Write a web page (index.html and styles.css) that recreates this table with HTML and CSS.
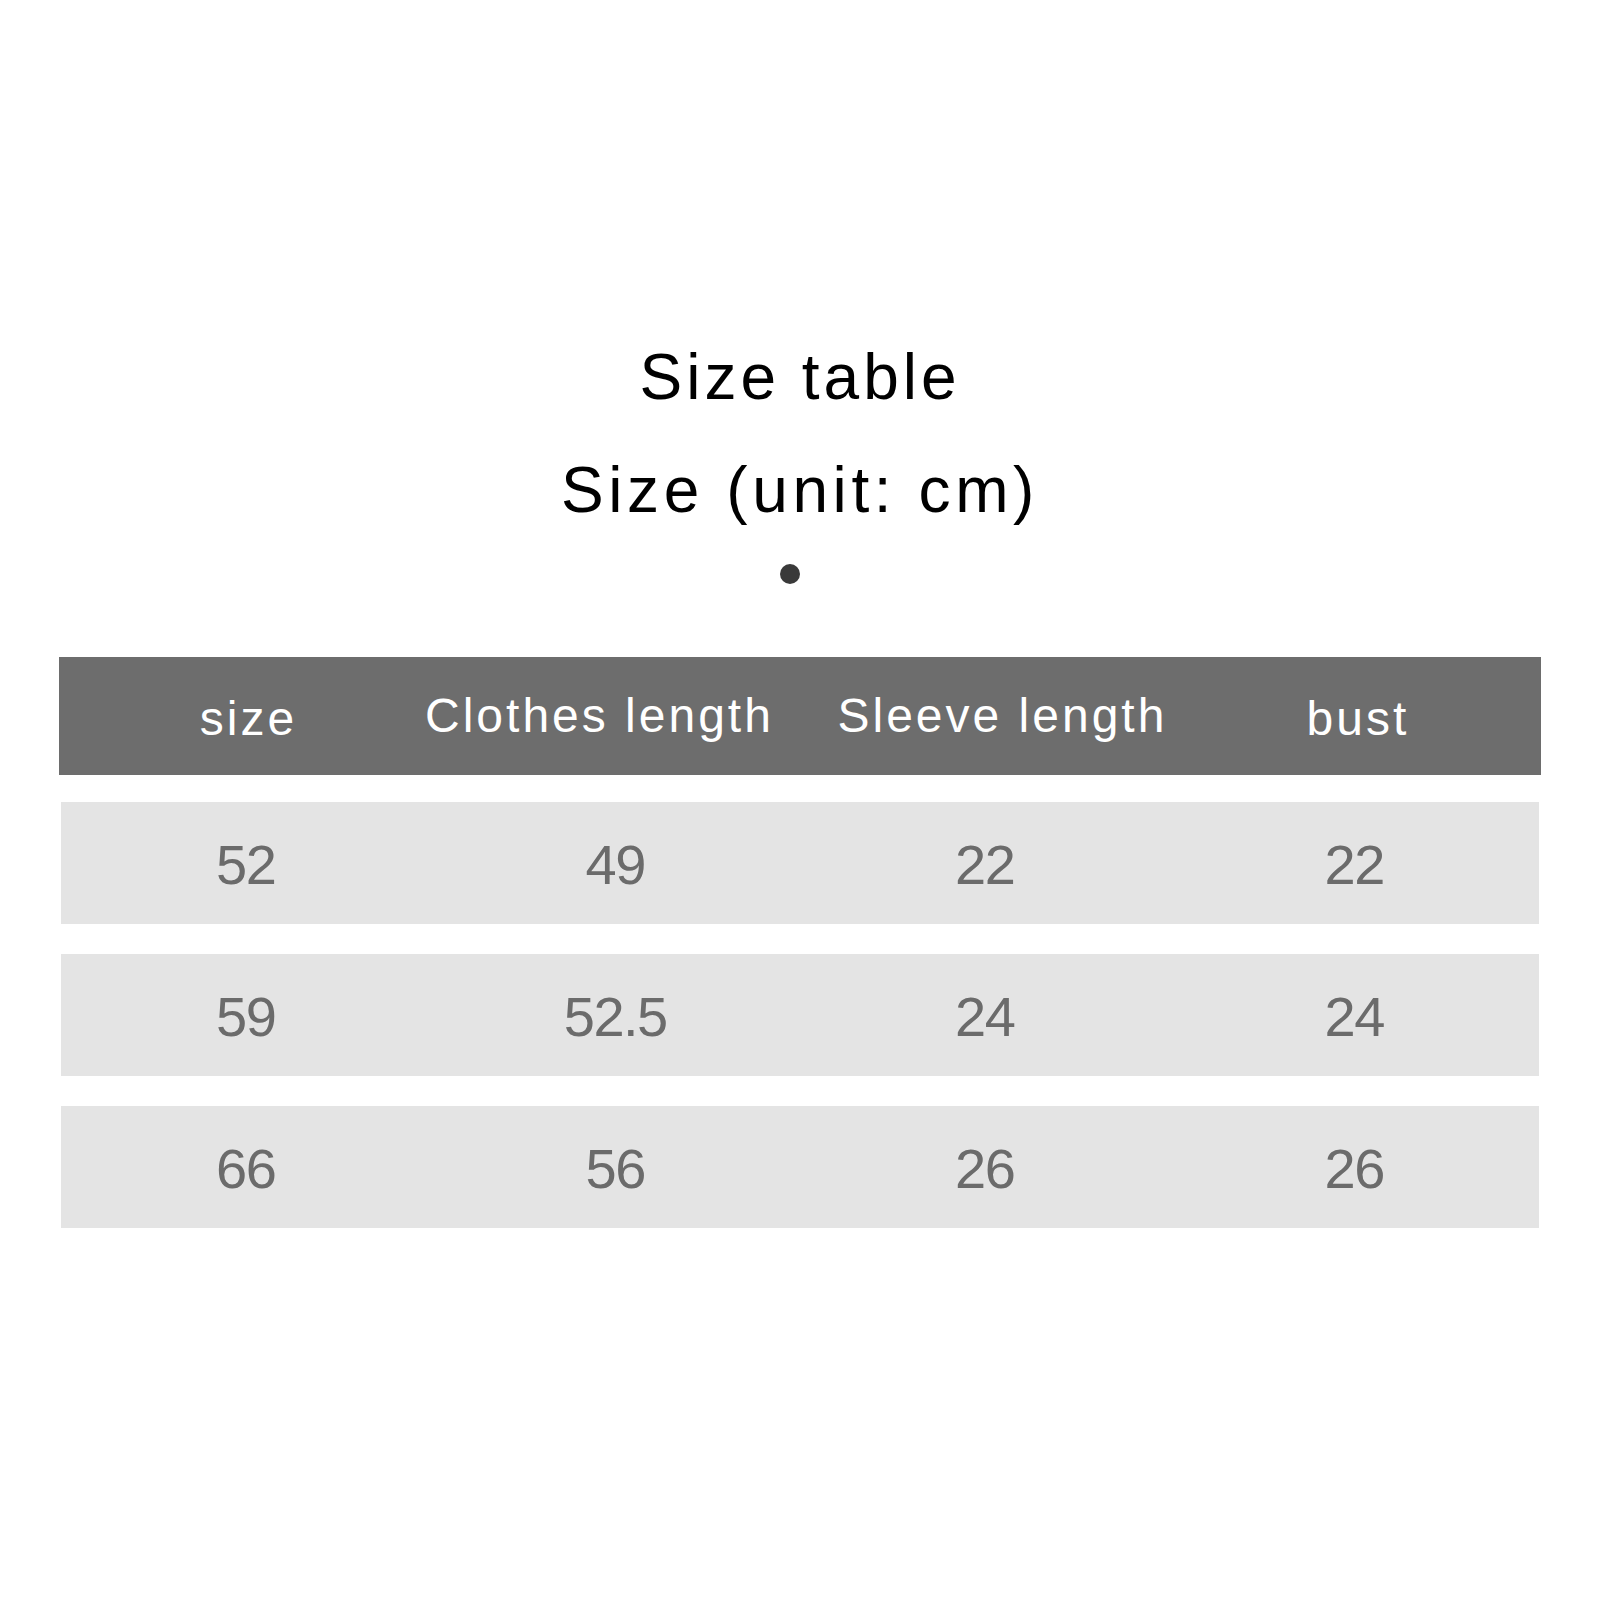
FILE: index.html
```html
<!DOCTYPE html>
<html lang="en">
<head>
<meta charset="utf-8">
<title>Size table</title>
<link rel="stylesheet" href="styles.css">
</head>
<body>
<main class="page">
  <h1 class="title">Size table</h1>
  <h2 class="title title-unit">Size (unit: cm)</h2>
  <div class="dot-row"><span class="dot"></span></div>
  <section class="table">
    <div class="head">
      <div class="hcell h-size">size</div>
      <div class="hcell h-clothes">Clothes length</div>
      <div class="hcell h-sleeve">Sleeve length</div>
      <div class="hcell h-bust">bust</div>
    </div>
    <div class="row">
      <div class="cell">52</div>
      <div class="cell">49</div>
      <div class="cell">22</div>
      <div class="cell">22</div>
    </div>
    <div class="row">
      <div class="cell">59</div>
      <div class="cell">52.5</div>
      <div class="cell">24</div>
      <div class="cell">24</div>
    </div>
    <div class="row">
      <div class="cell">66</div>
      <div class="cell">56</div>
      <div class="cell">26</div>
      <div class="cell">26</div>
    </div>
  </section>
</main>
</body>
</html>
```
FILE: styles.css
```css
html, body {
  margin: 0;
  padding: 0;
  background: #ffffff;
}

.page {
  width: 1600px;
  height: 1600px;
  box-sizing: border-box;
  padding-top: 321px;
  font-family: "Liberation Sans", Arial, sans-serif;
}

.title {
  margin: 0;
  font-size: 64px;
  font-weight: normal;
  line-height: 113px;
  letter-spacing: 4px;
  color: #000000;
  text-align: center;
}

.title-unit {
  letter-spacing: 4.6px;
}

.dot-row {
  display: flex;
  justify-content: center;
  padding-top: 17px;
  padding-bottom: 3px;
  padding-right: 20px;
}

.dot {
  width: 20px;
  height: 20px;
  border-radius: 50%;
  background: #3a3a3a;
}

.table {
  margin-top: 70px;
  display: flex;
  flex-direction: column;
}

.head {
  margin: 0 59px;
  height: 118px;
  background: #6d6d6d;
  display: grid;
  grid-template-columns: repeat(4, 1fr);
}

.hcell {
  color: #ffffff;
  font-size: 48px;
  line-height: 118px;
  letter-spacing: 3px;
  text-align: center;
  white-space: nowrap;
}

.h-size { padding-left: 13px; padding-top: 3px; }
.h-clothes { padding-right: 35px; }
.h-sleeve { padding-left: 21px; }
.h-bust { padding-top: 3px; }

.row {
  margin: 0 61px;
  height: 122px;
  background: #e4e4e4;
  display: grid;
  grid-template-columns: repeat(4, 1fr);
}

.head + .row { margin-top: 27px; }
.row + .row { margin-top: 30px; }

.cell {
  color: #6b6b6b;
  font-size: 56px;
  line-height: 121px;
  padding-top: 2px;
  letter-spacing: -1.5px;
  text-align: center;
}
```
